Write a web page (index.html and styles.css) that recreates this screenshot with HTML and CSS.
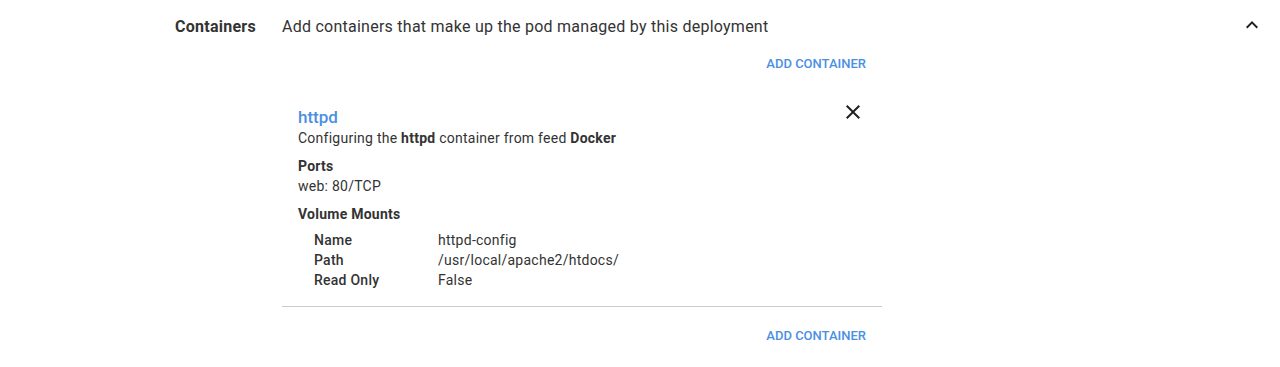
FILE: index.html
```html
<!DOCTYPE html>
<html lang="en">
<head>
<meta charset="utf-8">
<title>Containers</title>
<link rel="stylesheet" href="styles.css">
</head>
<body>
<section class="section">
  <div class="label">Containers</div>
  <div class="content">
    <div class="desc">Add containers that make up the pod managed by this deployment</div>
    <div class="actions"><button class="btn">Add container</button></div>
    <div class="card">
      <div class="card-head">
        <div class="title">httpd</div>
        <button class="close" aria-label="Remove">
          <svg width="24" height="24" viewBox="0 0 24 24"><path d="M19 6.41L17.59 5 12 10.59 6.41 5 5 6.41 10.59 12 5 17.59 6.41 19 12 13.41 17.59 19 19 17.59 13.41 12z" fill="#212121"/></svg>
        </button>
      </div>
      <div class="text">Configuring the <b>httpd</b> container from feed <b>Docker</b></div>
      <div class="group">
        <div class="heading">Ports</div>
        <div class="text">web: 80/TCP</div>
      </div>
      <div class="group">
        <div class="heading">Volume Mounts</div>
        <div class="mounts">
          <div class="key">Name</div><div class="val">httpd-config</div>
          <div class="key">Path</div><div class="val">/usr/local/apache2/htdocs/</div>
          <div class="key">Read Only</div><div class="val">False</div>
        </div>
      </div>
    </div>
    <div class="actions bottom"><button class="btn">Add container</button></div>
  </div>
  <button class="toggle" aria-label="Collapse">
    <svg width="24" height="24" viewBox="0 0 24 24"><path d="M12 8l-6 6 1.41 1.41L12 10.83l4.59 4.58L18 14z" fill="#212121"/></svg>
  </button>
</section>
</body>
</html>
```

FILE: styles.css
```css
* { box-sizing: border-box; }
html, body { margin: 0; padding: 0; background: #fff; }
body {
  font-family: Roboto, "Liberation Sans", sans-serif;
  color: #333;
  font-size: 14px;
  line-height: 20px;
  letter-spacing: 0.25px;
}
.section {
  display: flex;
  align-items: flex-start;
  padding: 17px 16px 0 175px;
}
.label {
  width: 107px;
  flex: none;
  font-size: 16px;
  font-weight: 700;
  line-height: 20px;
  color: #333;
}
.content {
  width: 600px;
  flex: none;
}
.desc {
  font-size: 16px;
  line-height: 20px;
  color: #333;
}
.actions {
  display: flex;
  justify-content: flex-end;
  padding-right: 8px;
  margin-top: 8px;
}
.actions.bottom { margin-top: 10px; }
.btn {
  border: 0;
  background: none;
  height: 36px;
  padding: 0 8px;
  font-family: inherit;
  font-size: 13px;
  font-weight: 500;
  letter-spacing: 0;
  text-transform: uppercase;
  color: #4a90e2;
  cursor: pointer;
}
.card {
  margin-top: 9px;
  padding: 16px 16px 16px 16px;
  border-bottom: 1px solid #ccc;
}
.card-head {
  display: flex;
  justify-content: space-between;
  align-items: flex-start;
}
.title {
  font-size: 17px;
  line-height: 22px;
  letter-spacing: 0;
  font-weight: 500;
  color: #4a90e2;
}
.close, .toggle {
  border: 0;
  background: none;
  padding: 0;
  width: 24px;
  height: 24px;
  display: block;
  cursor: pointer;
}
.close { margin-top: -6px; margin-right: 1px; }
.toggle { margin-left: auto; margin-top: -4px; }
.group { margin-top: 8px; }
.heading { font-weight: 700; }
.mounts {
  display: grid;
  grid-template-columns: 124px 1fr;
  padding-left: 16px;
  margin-top: 6px;
}
.key { font-weight: 500; }
```
